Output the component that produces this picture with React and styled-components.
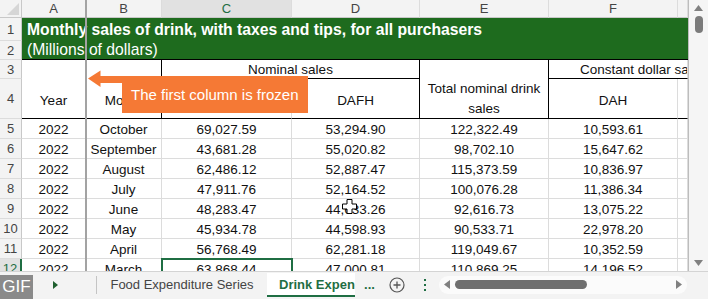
import React from 'react'
import styled, { createGlobalStyle } from 'styled-components'

const GREEN = '#1e6b1e'
const XL = '#1f6e43'
const GRID = '#dcdcdc'
const HEADLINE = '#c8c8c8'

const GlobalStyle = createGlobalStyle`
  html, body {
    margin: 0;
    padding: 0;
    background: #fff;
  }
  body {
    font-family: "Liberation Sans", Arial, sans-serif;
    overflow: hidden;
  }
`

const colWidths = [22, 64, 76, 130, 128, 129, 129, 10]
// G is only a sliver, its letter is not shown
const letters = ['A', 'B', 'C', 'D', 'E', 'F', '']

const rows = [
    ['2022', 'October', '69,027.59', '53,294.90', '122,322.49', '10,593.61'],
    ['2022', 'September', '43,681.28', '55,020.82', '98,702.10', '15,647.62'],
    ['2022', 'August', '62,486.12', '52,887.47', '115,373.59', '10,836.97'],
    ['2022', 'July', '47,911.76', '52,164.52', '100,076.28', '11,386.34'],
    ['2022', 'June', '48,283.47', '44,633.26', '92,616.73', '13,075.22'],
    ['2022', 'May', '45,934.78', '44,598.93', '90,533.71', '22,978.20'],
    ['2022', 'April', '56,768.49', '62,281.18', '119,049.67', '10,352.59'],
    ['2022', 'March', '63,868.44', '47,000.81', '110,869.25', '14,196.52'],
]

export default function App() {
    return (
        <Window>
            <GlobalStyle />
            <Main>
                <Pane>
                    <Grid>
                        <Corner><Triangle /></Corner>
                        {letters.map((l, i) => (
                            <ColHead key={i} $sel={l === 'C'}>{l}</ColHead>
                        ))}

                        {[1, 2, 3, 4].map((n) => (
                            <RowHead key={n} $row={n + 1}>{n}</RowHead>
                        ))}

                        <TitleCell $row={2} $bold>
                            Monthly sales of drink, with taxes and tips, for all purchasers
                        </TitleCell>
                        <TitleCell $row={3} $last>(Millions of dollars)</TitleCell>

                        <HeadCell $col={2} $row={4} $rspan={2} $v="flex-end" $pb={9} $bb="#000">Year</HeadCell>
                        <HeadCell $col={3} $row={4} $rspan={2} $v="flex-end" $pb={9} $br="#000" $bb="#000">Month</HeadCell>
                        <HeadCell $col={4} $span={2} $row={4} $br="#000" $bb="#000">Nominal sales</HeadCell>
                        <HeadCell $col={4} $row={5} $bb="#000" />
                        <HeadCell $col={5} $row={5} $v="flex-end" $pb={9} $br="#000" $bb="#000">DAFH</HeadCell>
                        <HeadCell $col={6} $row={4} $rspan={2} $v="flex-end" $wrap $br="#000" $bb="#000">
                            Total nominal drink sales
                        </HeadCell>
                        <HeadCell $col={7} $span={2} $row={4} $h="flex-start" $pl={31} $bb="#000">
                            Constant dollar sales
                        </HeadCell>
                        <HeadCell $col={7} $row={5} $v="flex-end" $pb={9} $bb="#000">DAH</HeadCell>
                        <HeadCell $col={8} $row={5} $bb="#000" />

                        {rows.map((r, i) => (
                            <React.Fragment key={i}>
                                <RowHead $row={6 + i} $sel={i === 7}>{5 + i}</RowHead>
                                {r.map((v, j) => (
                                    <DataCell key={j} $col={2 + j} $row={6 + i} $sel={i === 7 && j === 2}>
                                        {v}
                                    </DataCell>
                                ))}
                                <DataCell $col={8} $row={6 + i} />
                            </React.Fragment>
                        ))}
                    </Grid>

                    <FrozenLine />

                    <Callout>
                        <svg width="34" height="18" viewBox="0 0 34 18">
                            <polygon points="0,8.5 12.5,0.5 12.5,17 " fill="#f57935" />
                            <rect x="12" y="6" width="22" height="7" fill="#f57935" />
                        </svg>
                        <CalloutBox>The first column is frozen</CalloutBox>
                    </Callout>

                    <Cursor width="15" height="15" viewBox="0 0 15 15">
                        <path
                            d="M5 0.5 H10 V5 H14.5 V10 H10 V14.5 H5 V10 H0.5 V5 H5 Z"
                            fill="#fff"
                            stroke="#000"
                            strokeWidth="1"
                        />
                    </Cursor>
                </Pane>

                <VScroll>
                    <svg width="9" height="6" viewBox="0 0 9 6"><polygon points="4.5,0 9,6 0,6" fill="#808080" /></svg>
                    <VThumb />
                    <Spacer />
                    <svg width="9" height="6" viewBox="0 0 9 6"><polygon points="0,0 9,0 4.5,6" fill="#808080" /></svg>
                </VScroll>
            </Main>

            <TabBar>
                <Gif>GIF</Gif>
                <SheetNav>
                    <svg width="5" height="8" viewBox="0 0 5 8"><polygon points="0,0 5,4 0,8" fill="#1f5f2f" /></svg>
                </SheetNav>
                <Tab>Food Expenditure Series</Tab>
                <ActiveTab>Drink Expenditure Series</ActiveTab>
                <More>...</More>
                <AddSheet>
                    <svg width="16" height="16" viewBox="0 0 16 16">
                        <circle cx="8" cy="8" r="7" fill="none" stroke="#555" strokeWidth="1.2" />
                        <path d="M8 4.5 V11.5 M4.5 8 H11.5" stroke="#555" strokeWidth="1.3" />
                    </svg>
                </AddSheet>
                <Dots>
                    <i /><i /><i />
                </Dots>
                <HScroll>
                    <svg width="6" height="9" viewBox="0 0 6 9"><polygon points="0,4.5 6,0 6,9" fill="#808080" /></svg>
                    <HThumb />
                    <Spacer />
                    <svg width="6" height="9" viewBox="0 0 6 9"><polygon points="0,0 6,4.5 0,9" fill="#808080" /></svg>
                </HScroll>
            </TabBar>
        </Window>
    )
}

const Window = styled.div`
    width: 708px;
    height: 299px;
    display: flex;
    flex-direction: column;
    overflow: hidden;
    background: #fff;
`

const Main = styled.div`
    display: flex;
    height: 271px;
    flex: none;
`

const Pane = styled.div`
    position: relative;
    width: 688px;
    height: 271px;
    overflow: hidden;
    flex: none;
    border-right: 1px solid #bdbdbd;
`

const Grid = styled.div`
    display: grid;
    grid-template-columns: ${colWidths.map((w) => w + 'px').join(' ')};
    grid-template-rows: 18px 23px 19px 19px 40px repeat(8, 20px);
    font-size: 13.5px;
    color: #111;
`

const Corner = styled.div`
    box-sizing: border-box;
    background: #f3f3f3;
    border-right: 1px solid ${HEADLINE};
    border-bottom: 1px solid ${HEADLINE};
    display: flex;
    align-items: flex-end;
    justify-content: flex-end;
    padding: 0 2px 2px 0;
`

const Triangle = styled.div`
    width: 12px;
    height: 12px;
    background: #d6d6d6;
    clip-path: polygon(100% 0, 100% 100%, 0 100%);
`

const ColHead = styled.div`
    box-sizing: border-box;
    background: ${(p) => (p.$sel ? '#e1e1e1' : '#f3f3f3')};
    color: ${(p) => (p.$sel ? XL : '#444')};
    border-right: 1px solid ${GRID};
    border-bottom: 1px solid ${HEADLINE};
    font-size: 13px;
    display: flex;
    align-items: center;
    justify-content: center;
    overflow: hidden;
`

const RowHead = styled.div`
    grid-column: 1;
    grid-row: ${(p) => p.$row};
    box-sizing: border-box;
    background: ${(p) => (p.$sel ? '#e1e1e1' : '#f3f3f3')};
    color: ${(p) => (p.$sel ? XL : '#444')};
    border-right: ${(p) => (p.$sel ? `2px solid ${XL}` : `1px solid ${HEADLINE}`)};
    border-bottom: 1px solid ${GRID};
    font-size: 13px;
    display: flex;
    align-items: center;
    justify-content: center;
`

const TitleCell = styled.div`
    grid-column: 2 / span 7;
    grid-row: ${(p) => p.$row};
    box-sizing: border-box;
    background: ${GREEN};
    color: #fff;
    font-size: 15.7px;
    font-weight: ${(p) => (p.$bold ? 700 : 400)};
    display: flex;
    align-items: center;
    padding-left: 5px;
    white-space: nowrap;
    border-bottom: ${(p) => (p.$last ? '1px solid #000' : 'none')};
`

const HeadCell = styled.div`
    grid-column: ${(p) => p.$col} / span ${(p) => p.$span || 1};
    grid-row: ${(p) => p.$row} / span ${(p) => p.$rspan || 1};
    box-sizing: border-box;
    background: #fff;
    display: flex;
    align-items: ${(p) => p.$v || 'center'};
    justify-content: ${(p) => p.$h || 'center'};
    text-align: center;
    line-height: ${(p) => (p.$wrap ? '19.5px' : '17px')};
    white-space: ${(p) => (p.$wrap ? 'normal' : 'nowrap')};
    overflow: hidden;
    padding: 0 4px ${(p) => p.$pb || 0}px ${(p) => p.$pl || 4}px;
    border-right: 1px solid ${(p) => p.$br || GRID};
    border-bottom: 1px solid ${(p) => p.$bb || GRID};
`

const DataCell = styled.div`
    grid-column: ${(p) => p.$col};
    grid-row: ${(p) => p.$row};
    box-sizing: border-box;
    display: flex;
    align-items: center;
    justify-content: center;
    padding-top: 2px;
    white-space: nowrap;
    overflow: hidden;
    border-right: 1px solid ${GRID};
    border-bottom: 1px solid ${GRID};
    outline: ${(p) => (p.$sel ? `2px solid ${XL}` : 'none')};
    outline-offset: -1px;
`

const FrozenLine = styled.div`
    position: absolute;
    left: 85px;
    top: 0;
    width: 2px;
    height: 100%;
    background: #a3a3a3;
`

const Callout = styled.div`
    position: absolute;
    left: 88px;
    top: 70px;
    display: flex;
    align-items: flex-start;
`

const CalloutBox = styled.div`
    margin-top: 6px;
    width: 186px;
    height: 37px;
    box-sizing: border-box;
    background: #f57935;
    color: #fff;
    font-size: 15px;
    line-height: 37px;
    padding-left: 9px;
    white-space: nowrap;
`

const Cursor = styled.svg`
    position: absolute;
    left: 342px;
    top: 199px;
`

const Spacer = styled.div`
    flex: 1;
`

const VScroll = styled.div`
    width: 19px;
    background: #f5f5f5;
    display: flex;
    flex-direction: column;
    align-items: center;
    padding: 5px 0 5px;
    box-sizing: border-box;
`

const VThumb = styled.div`
    width: 8px;
    height: 17px;
    margin-top: 5px;
    border-radius: 4px;
    background: #7b7b7b;
`

const TabBar = styled.div`
    height: 28px;
    flex: none;
    display: flex;
    align-items: center;
    background: #f3f3f3;
    border-top: 1px solid #d4d4d4;
    box-sizing: border-box;
    padding-bottom: 2px;
`

const Gif = styled.div`
    align-self: flex-end;
    margin-bottom: -2px;
    width: 33px;
    height: 24px;
    background: #8a8a8a;
    color: #fff;
    font-size: 17px;
    line-height: 24px;
    text-align: center;
    flex: none;
`

const SheetNav = styled.div`
    width: 64px;
    height: 18px;
    flex: none;
    display: flex;
    align-items: center;
    padding-left: 20px;
    box-sizing: border-box;
    border-right: 1px solid #c4c4c4;
`

const Tab = styled.div`
    width: 170px;
    flex: none;
    text-align: center;
    font-size: 13px;
    color: #444;
    white-space: nowrap;
`

const ActiveTab = styled.div`
    width: 88px;
    height: 24px;
    flex: none;
    box-sizing: border-box;
    padding: 0 0 0 12px;
    background: #fff;
    border-bottom: 2px solid ${XL};
    color: ${XL};
    font-weight: 700;
    font-size: 13px;
    line-height: 23px;
    white-space: nowrap;
    overflow: hidden;
`

const More = styled.div`
    width: 29px;
    flex: none;
    text-align: center;
    color: ${XL};
    font-weight: 700;
    font-size: 13px;
`

const AddSheet = styled.div`
    width: 26px;
    flex: none;
    display: flex;
    justify-content: center;
`

const Dots = styled.div`
    width: 29px;
    flex: none;
    display: flex;
    flex-direction: column;
    align-items: center;
    gap: 3px;

    i {
        width: 2px;
        height: 2px;
        background: ${XL};
    }
`

const HScroll = styled.div`
    width: 248px;
    height: 18px;
    flex: none;
    display: flex;
    align-items: center;
    padding: 0 5px;
    box-sizing: border-box;
    border-radius: 9px;
    background: #fbfbfb;
`

const HThumb = styled.div`
    width: 132px;
    height: 9px;
    margin-left: 5px;
    border-radius: 5px;
    background: #6f6f6f;
`
